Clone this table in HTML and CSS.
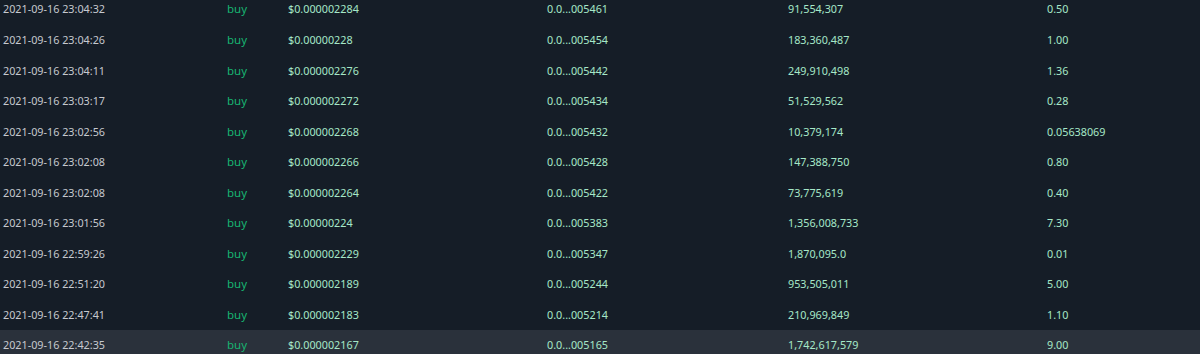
FILE: index.html
```html
<!DOCTYPE html>
<html>
<head>
<meta charset="utf-8">
<link rel="stylesheet" href="styles.css">
</head>
<body>
<div class="trades">
  <div class="row"><span class="c time">2021-09-16 23:04:32</span><span class="c side">buy</span><span class="c val">$0.000002284</span><span class="c val">0.0...005461</span><span class="c val">91,554,307</span><span class="c val">0.50</span></div>
  <div class="row"><span class="c time">2021-09-16 23:04:26</span><span class="c side">buy</span><span class="c val">$0.00000228</span><span class="c val">0.0...005454</span><span class="c val">183,360,487</span><span class="c val">1.00</span></div>
  <div class="row"><span class="c time">2021-09-16 23:04:11</span><span class="c side">buy</span><span class="c val">$0.000002276</span><span class="c val">0.0...005442</span><span class="c val">249,910,498</span><span class="c val">1.36</span></div>
  <div class="row"><span class="c time">2021-09-16 23:03:17</span><span class="c side">buy</span><span class="c val">$0.000002272</span><span class="c val">0.0...005434</span><span class="c val">51,529,562</span><span class="c val">0.28</span></div>
  <div class="row"><span class="c time">2021-09-16 23:02:56</span><span class="c side">buy</span><span class="c val">$0.000002268</span><span class="c val">0.0...005432</span><span class="c val">10,379,174</span><span class="c val">0.05638069</span></div>
  <div class="row"><span class="c time">2021-09-16 23:02:08</span><span class="c side">buy</span><span class="c val">$0.000002266</span><span class="c val">0.0...005428</span><span class="c val">147,388,750</span><span class="c val">0.80</span></div>
  <div class="row"><span class="c time">2021-09-16 23:02:08</span><span class="c side">buy</span><span class="c val">$0.000002264</span><span class="c val">0.0...005422</span><span class="c val">73,775,619</span><span class="c val">0.40</span></div>
  <div class="row"><span class="c time">2021-09-16 23:01:56</span><span class="c side">buy</span><span class="c val">$0.00000224</span><span class="c val">0.0...005383</span><span class="c val">1,356,008,733</span><span class="c val">7.30</span></div>
  <div class="row"><span class="c time">2021-09-16 22:59:26</span><span class="c side">buy</span><span class="c val">$0.000002229</span><span class="c val">0.0...005347</span><span class="c val">1,870,095.0</span><span class="c val">0.01</span></div>
  <div class="row"><span class="c time">2021-09-16 22:51:20</span><span class="c side">buy</span><span class="c val">$0.000002189</span><span class="c val">0.0...005244</span><span class="c val">953,505,011</span><span class="c val">5.00</span></div>
  <div class="row"><span class="c time">2021-09-16 22:47:41</span><span class="c side">buy</span><span class="c val">$0.000002183</span><span class="c val">0.0...005214</span><span class="c val">210,969,849</span><span class="c val">1.10</span></div>
  <div class="row hover"><span class="c time">2021-09-16 22:42:35</span><span class="c side">buy</span><span class="c val">$0.000002167</span><span class="c val">0.0...005165</span><span class="c val">1,742,617,579</span><span class="c val">9.00</span></div>
</div>
</body>
</html>
```

FILE: styles.css
```css
html, body {
  margin: 0;
  padding: 0;
  background: #151d27;
  overflow: hidden;
}
body {
  font-family: "Noto Sans", "Open Sans", sans-serif;
  font-size: 10.8px;
}
.trades {
  margin-top: -6.3px;
}
.row {
  display: grid;
  grid-template-columns: 224px 61px 259px 241px 259px 1fr;
  height: 30.55px;
  align-items: center;
}
.row.hover {
  background: #2a313b;
}
.c {
  padding-left: 3px;
  white-space: nowrap;
}
.time { color: #c6c9cf; }
.side { color: #17b471; font-size: 11.5px; }
.val { color: #a6e8c8; }
```
